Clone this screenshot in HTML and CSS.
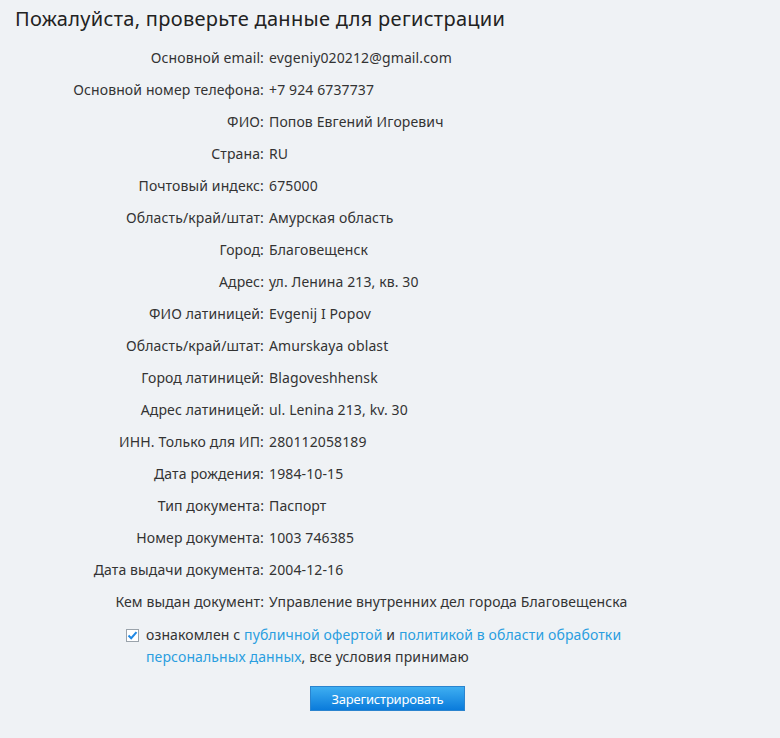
FILE: index.html
```html
<!DOCTYPE html>
<html lang="ru">
<head>
<meta charset="utf-8">
<link rel="stylesheet" href="styles.css">
</head>
<body>
<div class="page">
  <h1 class="title">Пожалуйста, проверьте данные для регистрации</h1>
  <div class="details">
    <div class="label">Основной email:</div><div class="value">evgeniy020212@gmail.com</div>
    <div class="label">Основной номер телефона:</div><div class="value">+7 924 6737737</div>
    <div class="label">ФИО:</div><div class="value">Попов Евгений Игоревич</div>
    <div class="label">Страна:</div><div class="value">RU</div>
    <div class="label">Почтовый индекс:</div><div class="value">675000</div>
    <div class="label">Область/край/штат:</div><div class="value">Амурская область</div>
    <div class="label">Город:</div><div class="value">Благовещенск</div>
    <div class="label">Адрес:</div><div class="value">ул. Ленина 213, кв. 30</div>
    <div class="label">ФИО латиницей:</div><div class="value">Evgenij I Popov</div>
    <div class="label">Область/край/штат:</div><div class="value">Amurskaya oblast</div>
    <div class="label">Город латиницей:</div><div class="value">Blagoveshhensk</div>
    <div class="label">Адрес латиницей:</div><div class="value">ul. Lenina 213, kv. 30</div>
    <div class="label">ИНН. Только для ИП:</div><div class="value">280112058189</div>
    <div class="label">Дата рождения:</div><div class="value">1984-10-15</div>
    <div class="label">Тип документа:</div><div class="value">Паспорт</div>
    <div class="label">Номер документа:</div><div class="value">1003 746385</div>
    <div class="label">Дата выдачи документа:</div><div class="value">2004-12-16</div>
    <div class="label">Кем выдан документ:</div><div class="value">Управление внутренних дел города Благовещенска</div>
  </div>
  <label class="agree">
    <span class="checkbox"><svg width="11" height="11" viewBox="0 0 11 11"><path d="M1.5 5.5 L4.2 8.2 L9.5 2.2" fill="none" stroke="#1e88e5" stroke-width="2"/></svg></span>
    <span class="agree-text">ознакомлен с <a href="#" class="link">публичной офертой</a> и <a href="#" class="link">политикой в области обработки персональных данных</a>, все условия принимаю</span>
  </label>
  <div class="actions">
    <button class="btn" type="button">Зарегистрировать</button>
  </div>
</div>
</body>
</html>
```
FILE: styles.css
```css
html, body {
  margin: 0;
  padding: 0;
  background: #eff2f5;
}
body {
  font-family: "Noto Sans", "Open Sans", sans-serif;
  color: #333;
  font-size: 14px;
}
.page {
  width: 780px;
  height: 738px;
  overflow: hidden;
}
.title {
  margin: 0;
  padding: 6px 0 0 15px;
  font-size: 20px;
  font-weight: 400;
  line-height: 26px;
  color: #222;
  letter-spacing: 0.3px;
}
.details {
  display: grid;
  grid-template-columns: 264px auto;
  column-gap: 5px;
  margin-top: 10px;
  letter-spacing: 0.12px;
}
.label {
  text-align: right;
  line-height: 32px;
  white-space: nowrap;
}
.value {
  line-height: 32px;
  white-space: nowrap;
}
.agree {
  display: flex;
  align-items: flex-start;
  margin: 6px 0 0 126px;
  width: 510px;
  letter-spacing: 0.12px;
}
.checkbox {
  flex: none;
  width: 11px;
  height: 11px;
  border: 1px solid #9aa3ab;
  background: #fff;
  margin-top: 5px;
  margin-right: 7px;
  display: flex;
  align-items: center;
  justify-content: center;
}
.agree-text {
  line-height: 22px;
}
.link {
  color: #2a9ee0;
  text-decoration: none;
}
.actions {
  display: flex;
  justify-content: center;
  padding-right: 5px;
  margin-top: 18px;
}
.btn {
  width: 155px;
  height: 25px;
  border: 1px solid #2a84cf;
  background: linear-gradient(#3eaef1, #0a7bdb);
  color: #fff;
  font-family: "Noto Sans", sans-serif;
  font-size: 13px;
  letter-spacing: -0.2px;
  padding: 0;
  cursor: pointer;
}
```
